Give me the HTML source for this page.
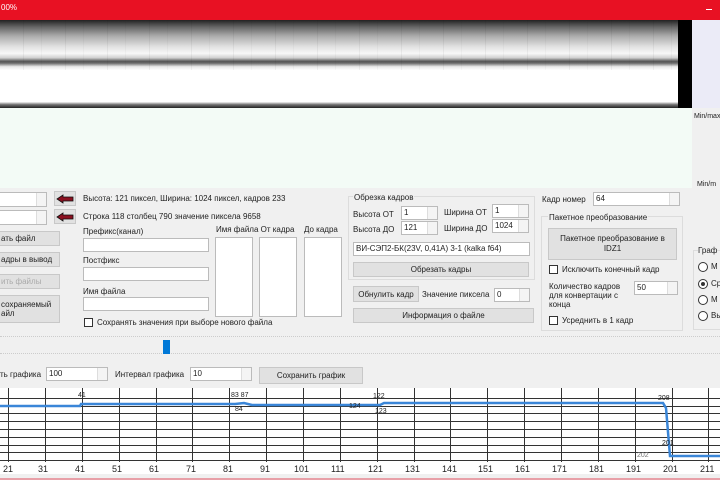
<!DOCTYPE html><html><head><meta charset="utf-8"><style>
*{margin:0;padding:0;box-sizing:border-box}
body{width:720px;height:480px;overflow:hidden;background:#f0f0f0;position:relative;font-family:"Liberation Sans","DejaVu Sans",sans-serif;font-size:8px;color:#222}
.a{position:absolute}
.tb{background:#fff;border:1px solid #bbb}
.btn{background:#e1e1e1;border:1px solid #c8c8c8;text-align:center;display:flex;align-items:center;justify-content:center}
.spin{background:#fff;border:1px solid #bbb;padding:1px 2px}
.spin:after{content:"";position:absolute;right:0;top:0;width:9px;height:100%;border-left:1px solid #ddd;background:#f4f4f4}
.cb{width:9px;height:9px;background:#fff;border:1px solid #333}
.rb{width:10px;height:10px;border-radius:50%;background:#fff;border:1px solid #333}
.grp{border:1px solid #dcdcdc}
.vl{position:absolute;top:388px;height:74px;width:1px;background:#333}
.hl{position:absolute;left:0;width:720px;height:1px;background:#333}
.xl{position:absolute;top:464px;font-size:9px}
</style></head><body>
<div class="a" style="left:0;top:0;width:720px;height:20px;background:#e81123;color:#fff;font-size:8px;padding:3px 1px">00%</div>
<div class="a" style="left:706px;top:9px;width:6px;height:1px;background:#fff"></div>
<div class="a" style="left:0;top:20px;width:678px;height:88px;background:linear-gradient(#222 0%,#666 8%,#aaa 18%,#e0e0e0 30%,#f8f8f8 38%,#d0d0d0 43%,#555 47%,#6a6a6a 49%,#e8e8e8 53%,#fff 57%,#fff 93%,#777 96%,#222 100%)"></div>
<div class="a" style="left:0;top:20px;width:678px;height:50px;background:repeating-linear-gradient(90deg,rgba(0,0,0,0) 0 23px,rgba(0,0,0,.1) 23px 24px,rgba(0,0,0,0) 24px 41px,rgba(0,0,0,.06) 41px 42px);opacity:.5"></div>
<div class="a" style="left:678px;top:20px;width:14px;height:88px;background:#000"></div>
<div class="a" style="left:692px;top:20px;width:28px;height:88px;background:#ebebf7"></div>
<div class="a" style="left:0;top:108px;width:692px;height:80px;background:#f3fbf6"></div>
<div class="a" style="left:694px;top:113px;font-size:7px">Min/max</div>
<div class="a" style="left:697px;top:181px;font-size:7px">Min/m</div>

<div class="a spin" style="left:-2px;top:192px;width:49px;height:15px"></div>
<div class="a spin" style="left:-2px;top:210px;width:49px;height:15px"></div>
<div class="a btn" style="left:54px;top:191px;width:22px;height:15px"><svg width="18" height="10"><path d="M1 5 L7 1 L7 3 L17 3 L17 7 L7 7 L7 9 Z" fill="#8b1020" stroke="#111" stroke-width=".8"/></svg></div>
<div class="a btn" style="left:54px;top:209px;width:22px;height:15px"><svg width="18" height="10"><path d="M1 5 L7 1 L7 3 L17 3 L17 7 L7 7 L7 9 Z" fill="#8b1020" stroke="#111" stroke-width=".8"/></svg></div>
<div class="a" style="left:83px;top:194px">Высота: 121 пиксел, Ширина: 1024 пиксел, кадров 233</div>
<div class="a" style="left:83px;top:212px">Строка 118 столбец 790 значение пиксела 9658</div>
<div class="a btn" style="left:-2px;top:231px;width:62px;height:15px;justify-content:flex-start;padding-left:2px">ать файл</div>
<div class="a btn" style="left:-2px;top:252px;width:62px;height:15px;justify-content:flex-start;padding-left:2px">адры в вывод</div>
<div class="a btn" style="left:-2px;top:274px;width:62px;height:15px;color:#aaa;justify-content:flex-start;padding-left:2px">ить файлы</div>
<div class="a btn" style="left:-2px;top:295px;width:62px;height:28px;justify-content:flex-start;padding-left:2px;text-align:left">сохраняемый<br>айл</div>
<div class="a" style="left:83px;top:227px">Префикс(канал)</div>
<div class="a tb" style="left:83px;top:238px;width:126px;height:14px"></div>
<div class="a" style="left:83px;top:256px">Постфикс</div>
<div class="a tb" style="left:83px;top:267px;width:126px;height:14px"></div>
<div class="a" style="left:83px;top:287px">Имя файла</div>
<div class="a tb" style="left:83px;top:297px;width:126px;height:14px"></div>
<div class="a cb" style="left:84px;top:318px"></div>
<div class="a" style="left:97px;top:318px">Сохранять значения при выборе нового файла</div>
<div class="a" style="left:216px;top:225px">Имя файла От кадра</div>
<div class="a" style="left:304px;top:225px">До кадра</div>
<div class="a tb" style="left:215px;top:237px;width:38px;height:80px"></div>
<div class="a tb" style="left:259px;top:237px;width:38px;height:80px"></div>
<div class="a tb" style="left:304px;top:237px;width:38px;height:80px"></div>

<div class="a grp" style="left:348px;top:196px;width:187px;height:84px"></div>
<div class="a" style="left:353px;top:193px;background:#f0f0f0;padding:0 1px">Обрезка кадров</div>
<div class="a" style="left:353px;top:210px">Высота ОТ</div>
<div class="a spin" style="left:401px;top:206px;width:37px;height:14px">1</div>
<div class="a" style="left:444px;top:208px">Ширина ОТ</div>
<div class="a spin" style="left:492px;top:204px;width:37px;height:14px">1</div>
<div class="a" style="left:353px;top:225px">Высота ДО</div>
<div class="a spin" style="left:401px;top:221px;width:37px;height:14px">121</div>
<div class="a" style="left:444px;top:224px">Ширина ДО</div>
<div class="a spin" style="left:492px;top:219px;width:37px;height:14px">1024</div>
<div class="a tb" style="left:353px;top:242px;width:177px;height:14px;padding:1px 2px">ВИ-СЭП2-БК(23V, 0,41A) 3-1 (kalka f64)</div>
<div class="a btn" style="left:353px;top:262px;width:176px;height:15px">Обрезать кадры</div>
<div class="a btn" style="left:353px;top:286px;width:66px;height:16px">Обнулить кадр</div>
<div class="a" style="left:422px;top:290px">Значение пиксела</div>
<div class="a spin" style="left:494px;top:288px;width:36px;height:14px">0</div>
<div class="a btn" style="left:353px;top:308px;width:181px;height:15px">Информация о файле</div>

<div class="a" style="left:542px;top:195px">Кадр номер</div>
<div class="a spin" style="left:593px;top:192px;width:87px;height:14px">64</div>
<div class="a grp" style="left:541px;top:216px;width:142px;height:115px"></div>
<div class="a" style="left:548px;top:213px;background:#f0f0f0;padding:0 1px">Пакетное преобразование</div>
<div class="a btn" style="left:548px;top:228px;width:129px;height:32px;line-height:10px">Пакетное преобразование в<br>IDZ1</div>
<div class="a cb" style="left:549px;top:265px"></div>
<div class="a" style="left:562px;top:265px">Исключить конечный кадр</div>
<div class="a" style="left:549px;top:282px;line-height:9px">Количество кадров<br>для конвертации с<br>конца</div>
<div class="a spin" style="left:634px;top:281px;width:44px;height:14px">50</div>
<div class="a cb" style="left:549px;top:316px"></div>
<div class="a" style="left:562px;top:316px">Усреднить в 1 кадр</div>
<div class="a grp" style="left:693px;top:250px;width:30px;height:80px"></div>
<div class="a" style="left:698px;top:246px;background:#f0f0f0">Граф</div>
<div class="a rb" style="left:698px;top:262px"></div><div class="a" style="left:711px;top:262px">М</div>
<div class="a rb" style="left:698px;top:279px"></div><div class="a" style="left:711px;top:279px">Ср</div>
<div class="a" style="left:701px;top:282px;width:4px;height:4px;border-radius:50%;background:#333"></div>
<div class="a rb" style="left:698px;top:295px"></div><div class="a" style="left:711px;top:295px">М</div>
<div class="a rb" style="left:698px;top:311px"></div><div class="a" style="left:711px;top:311px">Вь</div>

<div class="a" style="left:0;top:336px;width:720px;height:1px;border-top:1px dotted #ccc"></div>
<div class="a" style="left:0;top:353px;width:720px;height:1px;border-top:1px dotted #ccc"></div>
<div class="a" style="left:163px;top:340px;width:7px;height:14px;background:#0078d7"></div>
<div class="a" style="left:0;top:370px">ть графика</div>
<div class="a spin" style="left:46px;top:367px;width:62px;height:14px">100</div>
<div class="a" style="left:115px;top:370px">Интервал графика</div>
<div class="a spin" style="left:190px;top:367px;width:62px;height:14px">10</div>
<div class="a btn" style="left:259px;top:367px;width:104px;height:17px">Сохранить график</div>

<div class="a" style="left:0;top:388px;width:720px;height:86px;background:#fff"></div>
<div class="hl" style="top:398px"></div><div class="hl" style="top:406px"></div><div class="hl" style="top:413px"></div><div class="hl" style="top:421px"></div><div class="hl" style="top:429px"></div><div class="hl" style="top:437px"></div><div class="hl" style="top:445px"></div><div class="hl" style="top:452px"></div><div class="hl" style="top:460px"></div>
<div class="vl" style="left:8px"></div><div class="vl" style="left:45px"></div><div class="vl" style="left:82px"></div><div class="vl" style="left:119px"></div><div class="vl" style="left:156px"></div><div class="vl" style="left:192px"></div><div class="vl" style="left:229px"></div><div class="vl" style="left:266px"></div><div class="vl" style="left:303px"></div><div class="vl" style="left:340px"></div><div class="vl" style="left:377px"></div><div class="vl" style="left:414px"></div><div class="vl" style="left:450px"></div><div class="vl" style="left:487px"></div><div class="vl" style="left:524px"></div><div class="vl" style="left:561px"></div><div class="vl" style="left:598px"></div><div class="vl" style="left:635px"></div><div class="vl" style="left:672px"></div><div class="vl" style="left:708px"></div>
<svg class="a" style="left:0;top:388px" width="720" height="80"><polyline fill="none" stroke="#3a86d8" stroke-width="2.5" points="0,18 80,18 81,16 235,16 244,15 252,17 380,17 384,15 663,15 666,20 670,68 720,68"/></svg>
<div class="a" style="left:78px;top:392px;font-size:7px">41</div>
<div class="a" style="left:231px;top:392px;font-size:7px">83 87</div>
<div class="a" style="left:235px;top:406px;font-size:7px">84</div>
<div class="a" style="left:349px;top:403px;font-size:7px">124</div>
<div class="a" style="left:373px;top:393px;font-size:7px">122</div>
<div class="a" style="left:375px;top:408px;font-size:7px">123</div>
<div class="a" style="left:658px;top:395px;font-size:7px">208</div>
<div class="a" style="left:662px;top:440px;font-size:7px">201</div>
<div class="a" style="left:637px;top:452px;font-size:7px;color:#777">202</div>
<div class="xl" style="left:3px">21</div><div class="xl" style="left:38px">31</div><div class="xl" style="left:75px">41</div><div class="xl" style="left:112px">51</div><div class="xl" style="left:149px">61</div><div class="xl" style="left:186px">71</div><div class="xl" style="left:223px">81</div><div class="xl" style="left:260px">91</div><div class="xl" style="left:294px">101</div><div class="xl" style="left:331px">111</div><div class="xl" style="left:368px">121</div><div class="xl" style="left:405px">131</div><div class="xl" style="left:442px">141</div><div class="xl" style="left:478px">151</div><div class="xl" style="left:515px">161</div><div class="xl" style="left:552px">171</div><div class="xl" style="left:589px">181</div><div class="xl" style="left:626px">191</div><div class="xl" style="left:663px">201</div><div class="xl" style="left:700px">211</div>
<div class="a" style="left:0;top:478px;width:720px;height:2px;background:#e8a0a8"></div>
</body></html>
